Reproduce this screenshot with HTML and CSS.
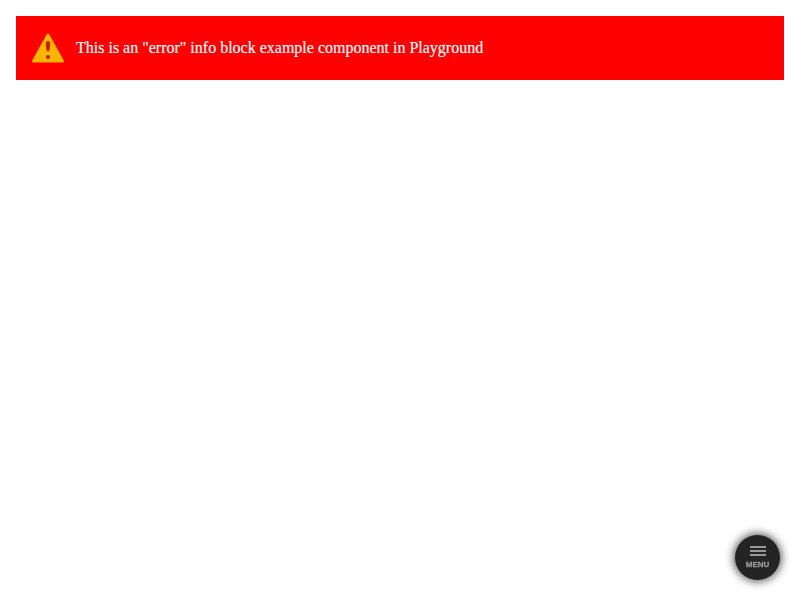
FILE: index.html
```html
<!DOCTYPE html>
<html lang="en">
<head>
<meta charset="utf-8">
<title>Playground</title>
<link rel="stylesheet" href="styles.css">
</head>
<body>
<div class="info-block">
<svg class="info-icon" viewBox="0 0 32 32" aria-hidden="true">
<path fill="#ffb400" d="M14.6 2.500a1.600 1.600 0 0 1 2.800 0L31.800 28.400a1.400 1.400 0 0 1-1.200 2.200H1.400a1.400 1.400 0 0 1-1.200-2.200z"/>
<path fill="#c62000" d="M16 9c1.400 0 2.300 1 2.200 2.300l-.6 6.500a1.600 1.600 0 0 1-3.200 0l-.6-6.500C13.700 10 14.600 9 16 9z"/>
<circle fill="#c62000" cx="16" cy="25" r="2"/>
</svg>
<span class="info-text">This is an "error" info block example component in Playground</span>
</div>
<button class="menu-button" type="button">
<svg class="menu-icon" viewBox="0 0 16 10" aria-hidden="true"><path fill="#999" d="M0 0h16v2H0zM0 4h16v2H0zM0 8h16v2H0z"/></svg>
<span class="menu-label">MENU</span>
</button>
</body>
</html>
```

FILE: styles.css
```css
body { margin: 0; padding: 16px; background: #fff; font-family: "Liberation Serif", serif; font-size: 16px; }
.info-block { display: flex; align-items: center; gap: 12px; box-sizing: border-box; height: 64px; padding: 16px; background: #f00; color: #fff; }
.info-icon { width: 32px; height: 32px; }
.info-text { line-height: 18px; -webkit-text-stroke: .15px #fff; }
.menu-button { position: fixed; right: 20px; bottom: 20px; width: 45px; height: 45px; padding: 0; border: 0; border-radius: 50%; display: flex; flex-direction: column; align-items: center; justify-content: center; gap: 4px; background: #242424; box-shadow: 0 0 10px 1px rgba(0,0,0,.75); color: #999; }
.menu-icon { width: 16px; height: 10px; }
.menu-label { font: bold 8px/9px "Liberation Sans", sans-serif; -webkit-text-stroke: .3px #999; }
```
